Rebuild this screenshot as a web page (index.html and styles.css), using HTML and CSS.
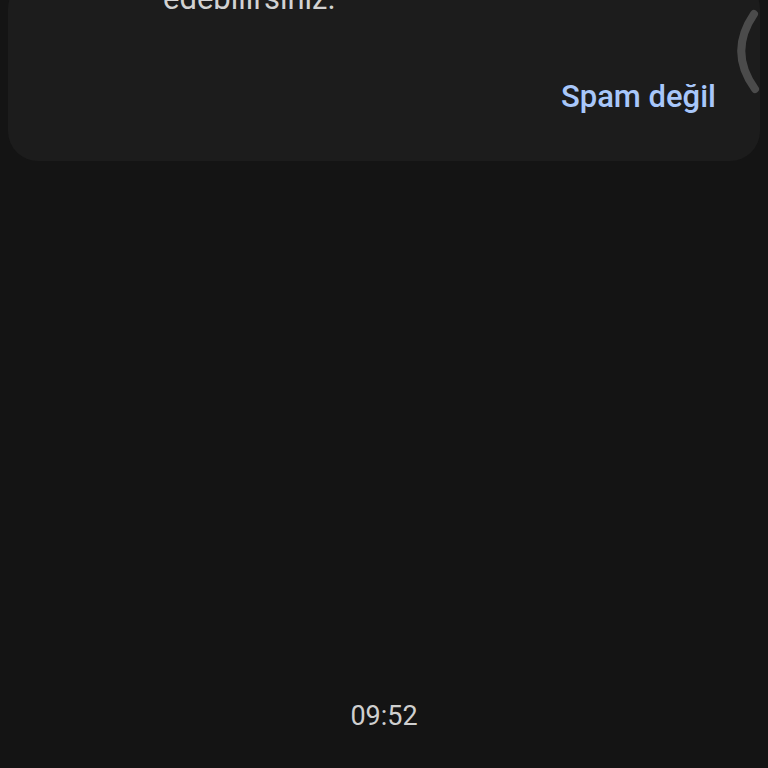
FILE: index.html
```html
<!DOCTYPE html>
<html lang="tr">
<head>
    <meta charset="UTF-8">
    <meta name="viewport" content="width=device-width, initial-scale=1.0">
    <title>Spam</title>
    <link rel="stylesheet" href="styles.css">
</head>
<body>
    <div class="screen">
        <!-- Spam notice card -->
        <div class="spam-card">
            <p class="spam-text">edebilirsiniz.</p>
            <div class="spam-actions">
                <a href="#" class="not-spam">Spam değil</a>
            </div>
            <svg class="scroll-thumb" width="30" height="100" viewBox="0 0 30 100">
                <path d="M24 14 Q-2 52 25 89" fill="none" stroke="#4b4b4b" stroke-width="8" stroke-linecap="round"/>
            </svg>
        </div>

        <!-- Timestamp -->
        <div class="timestamp">09:52</div>
    </div>
</body>
</html>
```

FILE: styles.css
```css
/* Page */
body {
    margin: 0;
    padding: 0;
    background: #141414;
    font-family: Roboto, "Noto Sans", sans-serif;
    overflow: hidden;
}

.screen {
    height: 768px;
    display: flex;
    flex-direction: column;
}

/* Card */
.spam-card {
    position: relative;
    margin: -21px 8px 0;
    padding: 0 44px 44px 155px;
    background: #1c1c1c;
    border-radius: 30px;
}

.spam-text {
    margin: 0;
    font-size: 31px;
    line-height: 40px;
    color: #d2d2d2;
}

.spam-actions {
    display: flex;
    justify-content: flex-end;
    margin-top: 58px;
}

.not-spam {
    font-size: 31px;
    line-height: 40px;
    color: #a8c7fa;
    text-decoration: none;
    font-weight: 500;
}

.scroll-thumb {
    position: absolute;
    top: 21px;
    right: 0;
}

/* Time */
.timestamp {
    margin-top: auto;
    padding-bottom: 36px;
    text-align: center;
    font-size: 27px;
    line-height: 32px;
    color: #cfcfcf;
}
```
